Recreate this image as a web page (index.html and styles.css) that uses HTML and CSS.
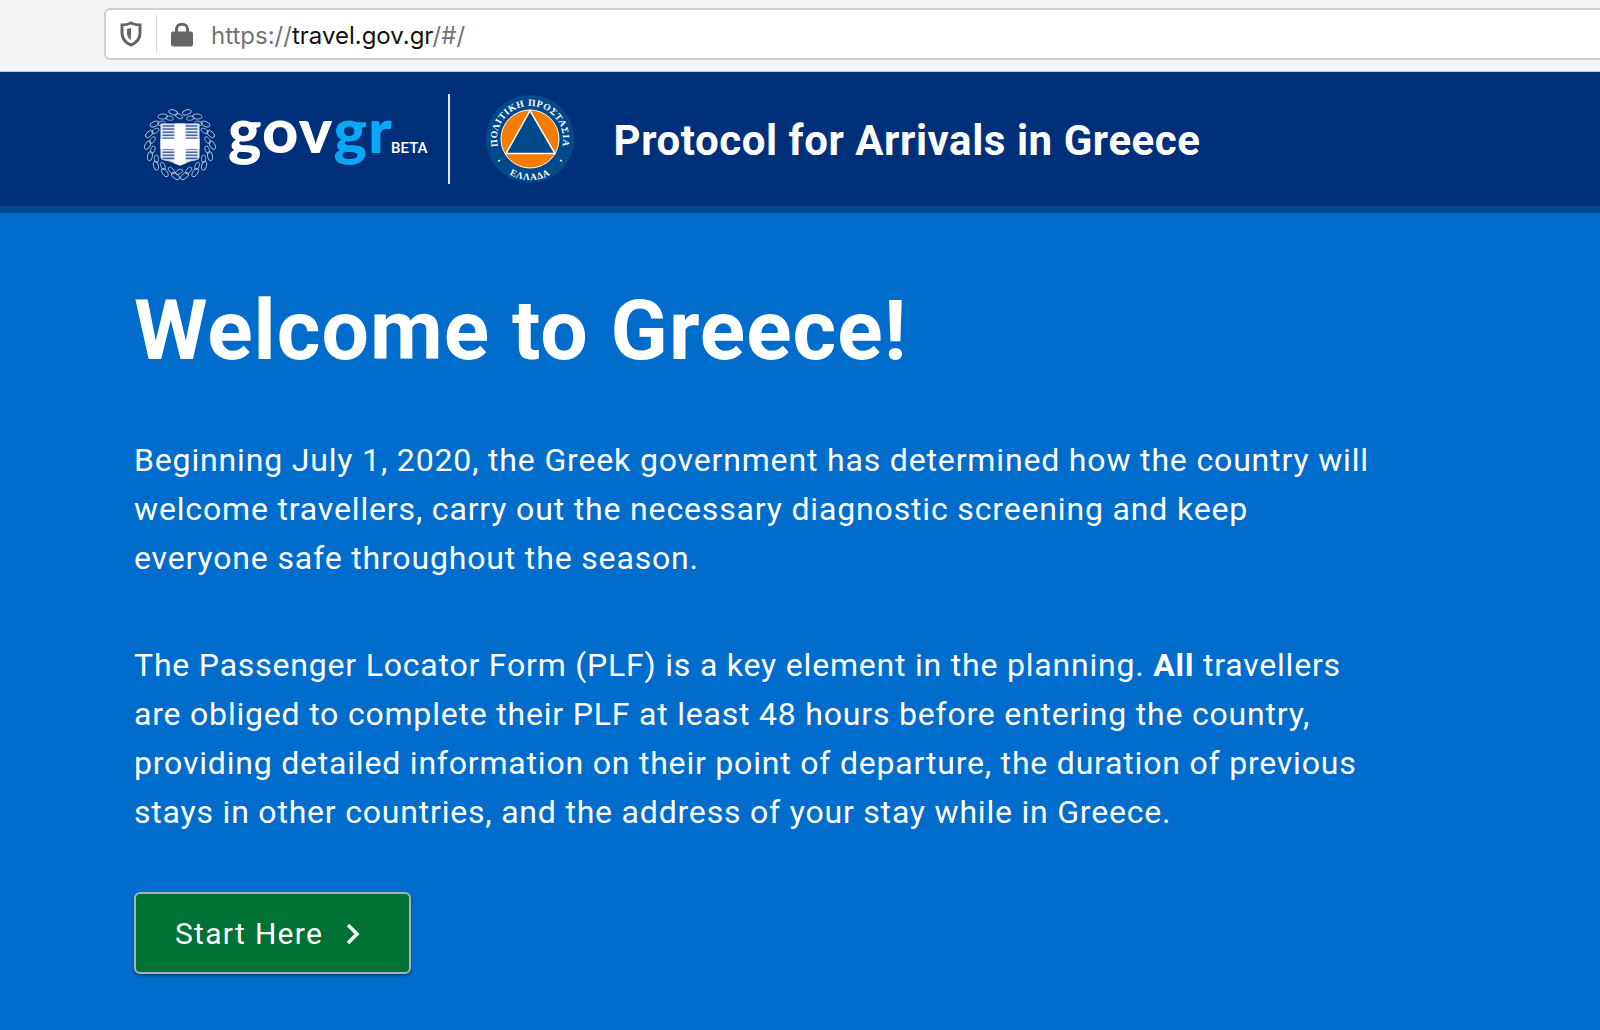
FILE: index.html
```html
<!DOCTYPE html>
<html lang="en">
<head>
	<meta charset="UTF-8">
	<title>Protocol for Arrivals in Greece</title>
	<link rel="stylesheet" href="styles.css">
</head>
<body>
	<div class="toolbar">
		<div class="urlbar">
			<svg class="shield" width="22" height="26" viewBox="0 0 22 26">
				<path d="M11 2 C14 3.500 17 4 20 4 L20 12 C20 18 16 22 11 24 C6 22 2 18 2 12 L2 4 C5 4 8 3.500 11 2 Z" fill="none" stroke="#666" stroke-width="3"/>
				<path d="M11 7 L11 19 C8.500 17.500 7 15 7 12 L7 8 Z" fill="#666"/>
			</svg>
			<span class="sep"></span>
			<svg class="lock" width="22" height="26" viewBox="0 0 22 26">
				<path d="M5.500 11 L5.500 8 C5.500 1.500 16.500 1.500 16.500 8 L16.500 11" fill="none" stroke="#666" stroke-width="3"/>
				<rect x="0" y="10.500" width="22" height="15" rx="2" fill="#666"/>
			</svg>
			<span class="url">https://<b>travel.gov.gr</b>/#/</span>
		</div>
	</div>

	<header class="head">
		<svg class="emblem" width="74" height="74" viewBox="0 0 72 72">
			<g class="leaves" id="wreath">
				<ellipse cx="36" cy="4.500" rx="2.400" ry="4.500" transform="rotate(12 36 36) rotate(60 36 4.500)"/>
				<ellipse cx="36" cy="4.500" rx="2.400" ry="4.500" transform="rotate(32 36 36) rotate(60 36 4.500)"/>
				<ellipse cx="36" cy="4.500" rx="2.400" ry="4.500" transform="rotate(52 36 36) rotate(60 36 4.500)"/>
				<ellipse cx="36" cy="4.500" rx="2.400" ry="4.500" transform="rotate(72 36 36) rotate(60 36 4.500)"/>
				<ellipse cx="36" cy="4.500" rx="2.400" ry="4.500" transform="rotate(92 36 36) rotate(60 36 4.500)"/>
				<ellipse cx="36" cy="4.500" rx="2.400" ry="4.500" transform="rotate(112 36 36) rotate(60 36 4.500)"/>
				<ellipse cx="36" cy="4.500" rx="2.400" ry="4.500" transform="rotate(132 36 36) rotate(60 36 4.500)"/>
				<ellipse cx="36" cy="4.500" rx="2.400" ry="4.500" transform="rotate(152 36 36) rotate(60 36 4.500)"/>
				<ellipse cx="36" cy="4.500" rx="2.400" ry="4.500" transform="rotate(172 36 36) rotate(60 36 4.500)"/>
				<ellipse cx="36" cy="4.500" rx="2.400" ry="4.500" transform="rotate(-12 36 36) rotate(-60 36 4.500)"/>
				<ellipse cx="36" cy="4.500" rx="2.400" ry="4.500" transform="rotate(-32 36 36) rotate(-60 36 4.500)"/>
				<ellipse cx="36" cy="4.500" rx="2.400" ry="4.500" transform="rotate(-52 36 36) rotate(-60 36 4.500)"/>
				<ellipse cx="36" cy="4.500" rx="2.400" ry="4.500" transform="rotate(-72 36 36) rotate(-60 36 4.500)"/>
				<ellipse cx="36" cy="4.500" rx="2.400" ry="4.500" transform="rotate(-92 36 36) rotate(-60 36 4.500)"/>
				<ellipse cx="36" cy="4.500" rx="2.400" ry="4.500" transform="rotate(-112 36 36) rotate(-60 36 4.500)"/>
				<ellipse cx="36" cy="4.500" rx="2.400" ry="4.500" transform="rotate(-132 36 36) rotate(-60 36 4.500)"/>
				<ellipse cx="36" cy="4.500" rx="2.400" ry="4.500" transform="rotate(-152 36 36) rotate(-60 36 4.500)"/>
				<ellipse cx="36" cy="4.500" rx="2.400" ry="4.500" transform="rotate(-172 36 36) rotate(-60 36 4.500)"/>
			</g>
			<use href="#wreath" transform="translate(36 36) scale(.86) rotate(10) translate(-36 -36)"/>
			<path d="M17 16 H55 V48 C55 52 51 52 46 53 L36 57 L26 53 C21 52 17 52 17 48 Z" fill="#dfe7f2"/>
			<path d="M19 18.500 H53 M19 21.500 H53 M19 24.500 H53 M19 27.500 H53 M19 30.500 H53 M19 41 H53 M19 44 H53 M19 47 H53 M19 50 H53" stroke="#48689e" stroke-width="1.500"/>
			<path d="M30.500 16 H41.500 V31 H55 V41 H41.500 V55 L36 57 L30.500 55 V41 H17 V31 H30.500 Z" fill="#fff"/>
		</svg>
		<div class="wordmark"><span class="gov">gov</span><span class="gr">gr</span><span class="beta">BETA</span></div>
		<span class="divider"></span>
		<svg class="civil" width="90" height="90" viewBox="0 0 90 90">
			<defs>
				<path id="arcTop" d="M15.100 58.900 A33 33 0 1 1 74.900 58.900"/>
				<path id="arcBottom" d="M18.600 76.400 A41 41 0 0 0 71.400 76.400"/>
			</defs>
			<circle cx="45" cy="45" r="44" fill="#004a8c"/>
			<circle cx="45" cy="45" r="29" fill="#f57c00" stroke="#fff" stroke-width="1"/>
			<path d="M45 16.700 L21 59.500 L70 59.500 Z" fill="#004a8c" stroke="#fff" stroke-width="1.500"/>
			<path d="M15 66 L13 67.500 M75 66 L77 67.500" stroke="#fff" stroke-width="1.500"/>
			<text class="civil-text"><textPath href="#arcTop" startOffset="50%" text-anchor="middle">ΠΟΛΙΤΙΚΗ ΠΡΟΣΤΑΣΙΑ</textPath></text>
			<text class="civil-text"><textPath href="#arcBottom" startOffset="50%" text-anchor="middle">ΕΛΛΑΔΑ</textPath></text>
		</svg>
		<div class="title">Protocol for Arrivals in Greece</div>
	</header>

	<main class="content">
		<h1>Welcome to Greece!</h1>
		<p class="intro">Beginning July 1, 2020, the Greek government has determined how the country will welcome travellers, carry out the necessary diagnostic screening and keep everyone safe throughout the season.</p>
		<p>The Passenger Locator Form (PLF) is a key element in the planning. <b>All</b> travellers are obliged to complete their PLF at least 48 hours before entering the country, providing detailed information on their point of departure, the duration of previous stays in other countries, and the address of your stay while in Greece.</p>
		<a class="start" href="#">Start Here
			<svg width="18" height="24" viewBox="0 0 18 24"><path d="M4 3 L13 12 L4 21" fill="none" stroke="#fff" stroke-width="3.500"/></svg>
		</a>
	</main>
</body>
</html>
```

FILE: styles.css
```css
* { margin: 0; padding: 0; box-sizing: border-box; }
html, body { height: 100%; overflow: hidden; }
body { background: #006dcc; font-family: Roboto, "Liberation Sans", sans-serif; color: #fff; }

.toolbar { height: 72px; padding: 8px 0 0 104px; background: #f4f5f6; border-bottom: 1px solid #c8ccd2; }
.urlbar { width: 1520px; height: 52px; display: flex; align-items: center; background: #fff; border: 2px solid #cfcfcf; border-radius: 6px; }
.shield { margin-left: 14px; }
.sep { width: 1px; height: 38px; margin: 0 14px 0 14px; background: #d8d8d8; }
.lock { margin-right: 12px; }
.url { margin: 2px 0 0 6px; font-family: "Inter", "Liberation Sans", sans-serif; font-size: 24px; color: #737373; }
.url b { font-weight: 400; color: #111; }

.head { height: 141px; display: flex; align-items: center; padding-left: 143px; background: #003079; border-bottom: 7px solid #004a8f; }
.emblem { margin-top: 10px; }
.leaves { fill: none; stroke: #c5d3e6; stroke-width: .8; }
.wordmark { display: flex; align-items: baseline; margin: 0 0 21px 11px; font-family: Lato, sans-serif; font-weight: 900; line-height: 1; }
.gov { font-size: 63px; letter-spacing: 1.200px; }
.gr { font-size: 63px; letter-spacing: 1.200px; color: #0aa8f5; }
.beta { margin-left: -2px; font-family: Roboto, sans-serif; font-size: 15px; font-weight: 500; }
.divider { width: 2px; height: 90px; margin: 0 35px 0 20px; background: #dfe7f2; }
.civil-text { font-family: "Liberation Serif", serif; font-size: 9.500px; font-weight: 700; letter-spacing: .6px; fill: #fff; }
.title { margin: 3px 0 0 39px; font-size: 42px; font-weight: 700; letter-spacing: .55px; }

.content { padding: 68px 0 0 134px; }
h1 { font-size: 84px; font-weight: 700; line-height: 1.2; letter-spacing: 1px; }
p { width: 1240px; margin-top: 54px; font-size: 32px; line-height: 49px; letter-spacing: .8px; }
p + p { margin-top: 58px; }
p b { font-weight: 700; }
.intro { letter-spacing: .84px; }

.start { display: inline-flex; align-items: center; gap: 21px; width: 277px; height: 82px; margin-top: 55px; padding: 2px 0 0 39px; background: #007236; border: 2px solid #a8b0b8; border-radius: 6px; box-shadow: 0 2px 3px rgba(0, 0, 0, .35); color: #fff; font-size: 30px; font-weight: 400; letter-spacing: 1.300px; text-decoration: none; }
```
